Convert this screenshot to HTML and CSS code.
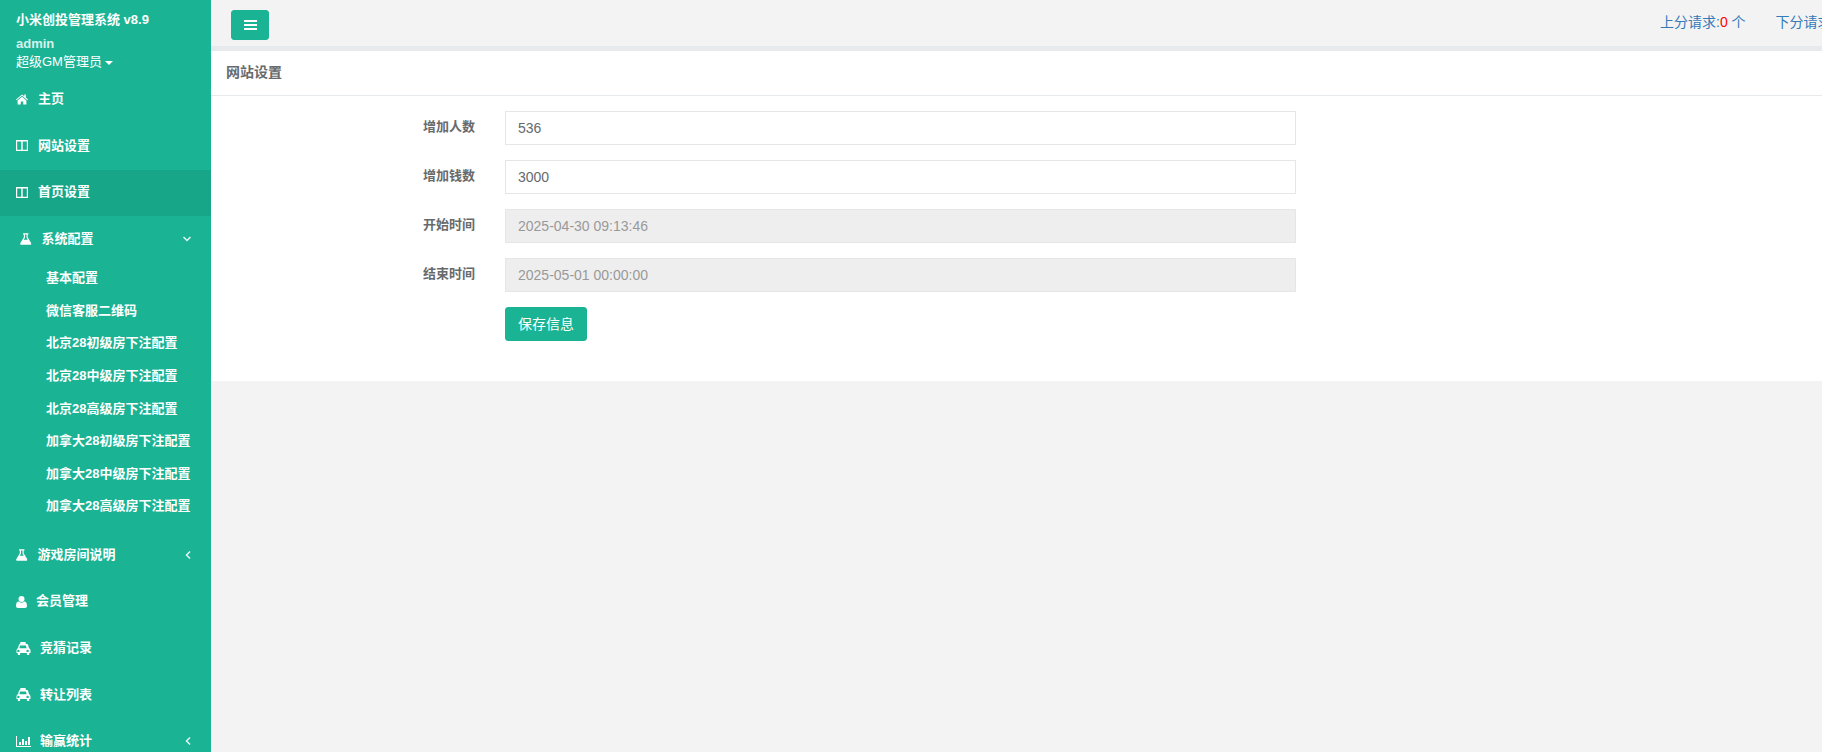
FILE: index.html
```html
<!DOCTYPE html>
<html lang="zh-CN">
<head>
<meta charset="utf-8">
<title>小米创投管理系统</title>
<link rel="stylesheet" href="styles.css">
</head>
<body>
<svg class="defs" width="0" height="0" aria-hidden="true">
  <symbol id="i-home" viewBox="1 1.200 12 10.200"><path d="M7 1.200 1 6.200l.6.800L7 2.600 12.400 7l.6-.8-2.200-1.900V1.400H9.300v1.600L7 1.200ZM7 3.600 2.600 7.200v4.200h3.200V8.200h2.400v3.200h3.200V7.200L7 3.600Z"/></symbol>
  <symbol id="i-columns" viewBox="0 0 12 11"><path fill-rule="evenodd" d="M0 0h12v11H0V0Zm1.200 1.500v8.300h4.100V1.500H1.200Zm5.500 0v8.300h4.100V1.500H6.700Z"/></symbol>
  <symbol id="i-flask" viewBox="0 0 12 12"><path fill-rule="evenodd" d="M3.200 0h5.600v1.200H8v3.100l3.600 6c.5.800 0 1.700-.9 1.700H1.300c-.9 0-1.400-.9-.9-1.700l3.600-6V1.200h-.8V0ZM5.200 1.200v3.400L3.900 6.800h4.200L6.800 4.600V1.200H5.200Z"/></symbol>
  <symbol id="i-user" viewBox="0 0 11 12"><circle cx="5.500" cy="3" r="3"/><path d="M0 10c0-3 1.200-4.400 2.600-4.400.8.700 1.800 1.100 2.900 1.100s2.100-.4 2.900-1.100C9.800 5.600 11 7 11 10c0 1.200-.8 2-1.900 2H1.900C.8 12 0 11.200 0 10Z"/></symbol>
  <symbol id="i-taxi" viewBox="0 0 15 13"><path fill-rule="evenodd" d="M5 0h5l.5 2h.7c.8 0 1.300.5 1.500 1.200l.8 3.100c.9.400 1.500 1.200 1.500 2.200V11h-1.300v2h-2.300v-2H4.600v2H2.300v-2H1V8.500c0-1 .6-1.800 1.500-2.200l.8-3.100C3.500 2.500 4 2 4.800 2h-.3L5 0ZM4.600 3.600l-.7 2.600h7.200l-.7-2.600H4.600ZM2.900 7.700a1.200 1.200 0 1 0 0 2.400 1.200 1.200 0 0 0 0-2.400Zm9.200 0a1.200 1.200 0 1 0 0 2.400 1.200 1.200 0 0 0 0-2.400Z" transform="translate(-.5 0)"/></symbol>
  <symbol id="i-chart" viewBox="0 0 15 11"><path d="M0 0h1v10h14v1H0V0Zm3 6h2v3H3V6Zm3-3h2v6H6V3Zm3 2h2v4H9V5Zm3-4h2v8h-2V1Z"/></symbol>
  <symbol id="i-down" viewBox="0 0 10 10"><path d="M1.500 3 5 6.500 8.500 3" fill="none" stroke="currentColor" stroke-width="1.500"/></symbol>
  <symbol id="i-left" viewBox="0 0 10 10"><path d="M7 1.500 3.500 5 7 8.500" fill="none" stroke="currentColor" stroke-width="1.500"/></symbol>
</svg>
<div class="app">
  <nav class="sidebar">
    <div class="profile">
      <div class="brand">小米创投管理系统 v8.9</div>
      <div class="uname">admin</div>
      <div class="role">超级GM管理员<span class="caret"></span></div>
    </div>
    <ul class="menu">
      <li class="item"><svg class="ico ico-home"><use href="#i-home"/></svg>主页</li>
      <li class="item"><svg class="ico ico-col"><use href="#i-columns"/></svg>网站设置</li>
      <li class="item is-active"><svg class="ico ico-col"><use href="#i-columns"/></svg>首页设置</li>
      <li class="group">
        <div class="item is-open"><svg class="ico ico-flask"><use href="#i-flask"/></svg>系统配置<svg class="arrow arrow-down"><use href="#i-down"/></svg></div>
        <ul class="submenu">
          <li>基本配置</li>
          <li>微信客服二维码</li>
          <li>北京28初级房下注配置</li>
          <li>北京28中级房下注配置</li>
          <li>北京28高级房下注配置</li>
          <li>加拿大28初级房下注配置</li>
          <li>加拿大28中级房下注配置</li>
          <li>加拿大28高级房下注配置</li>
        </ul>
      </li>
      <li class="item"><svg class="ico ico-flask"><use href="#i-flask"/></svg>游戏房间说明<svg class="arrow"><use href="#i-left"/></svg></li>
      <li class="item"><svg class="ico ico-user"><use href="#i-user"/></svg>会员管理</li>
      <li class="item"><svg class="ico ico-taxi"><use href="#i-taxi"/></svg>竞猜记录</li>
      <li class="item"><svg class="ico ico-taxi"><use href="#i-taxi"/></svg>转让列表</li>
      <li class="item"><svg class="ico ico-chart"><use href="#i-chart"/></svg>输赢统计<svg class="arrow"><use href="#i-left"/></svg></li>
    </ul>
  </nav>
  <main class="main">
    <header class="topbar">
      <button class="toggle" type="button" aria-label="菜单"><span></span><span></span><span></span></button>
      <div class="requests">
        <a class="req">上分请求:<b>0</b> 个</a>
        <a class="req">下分请求:<b>0</b> 个</a>
      </div>
    </header>
    <section class="panel">
      <h5 class="panel-title">网站设置</h5>
      <form class="form">
        <label class="lbl">增加人数</label><input class="field" value="536">
        <label class="lbl">增加钱数</label><input class="field" value="3000">
        <label class="lbl">开始时间</label><input class="field" value="2025-04-30 09:13:46" disabled>
        <label class="lbl">结束时间</label><input class="field" value="2025-05-01 00:00:00" disabled>
        <span></span><div><button class="save" type="button">保存信息</button></div>
      </form>
    </section>
  </main>
</div>
</body>
</html>
```
FILE: styles.css
```css
* { box-sizing: border-box; }
html, body { margin: 0; height: 100%; overflow: hidden; }
body {
  font-family: "Liberation Sans", "Noto Sans CJK SC", Arial, sans-serif;
  font-size: 13px;
  line-height: 1.42857;
  color: #676a6c;
  background: #f3f3f4;
}
.defs { position: absolute; }
.app { display: flex; height: 752px; overflow: hidden; }

.sidebar {
  flex: 0 0 211px;
  height: 752px;
  overflow: hidden;
  background: #1ab394;
  color: #fff;
  font-weight: 700;
}
.profile { padding: 10px 16px 0; height: 76.600px; }
.brand { font-size: 13px; line-height: 19px; }
.uname { margin-top: 6px; font-size: 13px; line-height: 17px; color: #d6f2ec; font-weight: 700; }
.role { font-weight: 400; font-size: 13px; line-height: 19px; }
.caret {
  display: inline-block;
  margin-left: 3px;
  vertical-align: middle;
  border-top: 4px solid #fff;
  border-left: 4px solid transparent;
  border-right: 4px solid transparent;
}
.menu, .submenu { list-style: none; margin: 0; padding: 0; }
.item {
  display: flex;
  align-items: center;
  height: 46.570px;
  padding: 0 16px 1px;
  line-height: 18.570px;
}
.is-active { background: #18a689; }
.is-open { padding-left: 20px; }
.ico { fill: #fff; flex: none; margin-right: 10px; }
.ico-home { width: 12px; height: 11px; }
.ico-col { width: 12px; height: 11px; }
.ico-flask { width: 11.500px; height: 12px; }
.ico-user { width: 11px; height: 12px; margin-right: 9px; }
.ico-taxi { width: 15px; height: 13px; margin-right: 9px; }
.ico-chart { width: 15px; height: 11px; margin-right: 9px; }
.arrow { width: 10px; height: 10px; margin-left: auto; margin-right: 2px; color: #e3f6f2; }
.arrow-down { margin-right: 3px; }
.submenu { padding-bottom: 9px; }
.submenu li { height: 32.570px; padding: 6.500px 10px 7.500px 46px; line-height: 18.570px; white-space: nowrap; }

.main { flex: 1; min-width: 0; }
.topbar {
  display: flex;
  align-items: flex-start;
  height: 46px;
  background: #f3f3f4;
  padding: 10px 0 0 20px;
}
.toggle {
  display: flex;
  flex-direction: column;
  align-items: center;
  justify-content: center;
  gap: 2px;
  width: 38px;
  height: 30px;
  padding: 0;
  border: 1px solid #1ab394;
  border-radius: 3px;
  background: #1ab394;
}
.toggle span { display: block; width: 13px; height: 2px; background: #fff; }
.requests {
  margin-left: auto;
  width: 162px;
  display: flex;
  gap: 30px;
  overflow: hidden;
  white-space: nowrap;
  padding-top: 3px;
  font-size: 14px;
}
.req { flex: none; color: #337ab7; }
.req b { color: #f00; font-weight: 400; }

.panel {
  height: 335px;
  background: #fff;
  border-top: 5px solid #e7eaec;
}
.panel-title {
  margin: 0;
  height: 45px;
  padding: 12px 15px 0;
  border-bottom: 1px solid #e7eaec;
  font-size: 14px;
  line-height: 18px;
  font-weight: 700;
}
.form {
  display: grid;
  grid-template-columns: 264px 791px;
  column-gap: 30px;
  row-gap: 15px;
  padding-top: 15px;
}
.lbl { text-align: right; font-weight: 700; padding-top: 7px; line-height: 18.570px; }
.field {
  display: block;
  width: 100%;
  height: 34px;
  padding: 6px 12px;
  border: 1px solid #e5e6e7;
  background: #fff;
  color: #676a6c;
  font: 14px/20px "Liberation Sans", "Noto Sans CJK SC", Arial, sans-serif;
}
.field:disabled { background: #eee; color: #999; -webkit-text-fill-color: #999; opacity: 1; }
.save {
  height: 34px;
  padding: 0 12px;
  border: 1px solid #1ab394;
  border-radius: 3px;
  background: #1ab394;
  color: #fff;
  font: 14px/20px "Liberation Sans", "Noto Sans CJK SC", Arial, sans-serif;
}
```
